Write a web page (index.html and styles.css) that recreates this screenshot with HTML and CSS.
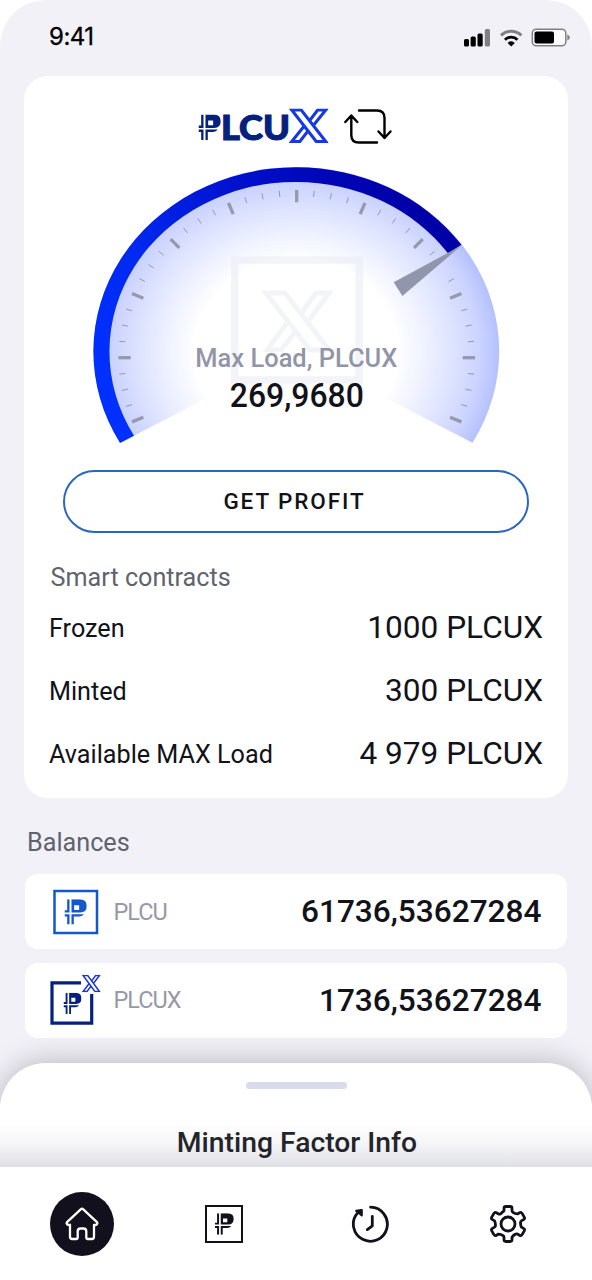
FILE: index.html
```html
<!DOCTYPE html>
<html lang="en">
<head>
<meta charset="utf-8">
<title>PLCUX wallet</title>
<link rel="stylesheet" href="styles.css">
</head>
<body>
<svg class="defs" width="0" height="0" aria-hidden="true">
  <symbol id="p-mark" viewBox="0 0 67 76" preserveAspectRatio="none">
    <path fill="currentColor" d="M8 0h7v40H0v-7h8zM0 45h15v31H8V52H0zM21 45h37q-5 7-14 7H28v24h-7z"/>
    <path fill="currentColor" fill-rule="evenodd" d="M21 0h24q22 1 22 20t-20 20H21zM29 18v14h15V18z"/>
  </symbol>
  <symbol id="x-mark" viewBox="0 0 40 34" preserveAspectRatio="none">
    <path fill="none" stroke="currentColor" stroke-width="3.1" d="M2.8 1.5h9.600l24.800 31h-9.600zM21 11.800l8-10.300h8.200L24.800 16.400M15.200 17.600L2.800 32.500H11l8.200-10.300"/>
  </symbol>
</svg>
<div class="phone">
  <header class="status">
    <span class="time">9:41</span>
    <svg width="107" height="20" viewBox="0 0 107 20">
      <rect x="1" y="11" width="5" height="7.5" rx="1.5"/><rect x="7.600" y="8.500" width="5.200" height="10" rx="1.500"/><rect x="14.500" y="5.500" width="5.200" height="13" rx="1.500"/>
      <rect x="21.800" y="1" width="5.200" height="17.500" rx="1.500" fill="#808084"/>
      <path d="M38 7.400a14.500 14.500 0 0 1 20.400 0" fill="none" stroke="#808084" stroke-width="3"/>
      <path d="M41.900 11.700a9 9 0 0 1 12.600 0" fill="none" stroke="#000" stroke-width="2.800"/>
      <path d="M48.200 18.600l-3.600-3.700a5 5 0 0 1 7.200 0z"/>
      <rect x="69.300" y="1.200" width="33.500" height="16.600" rx="4" fill="#fbfbfc" stroke="#808084" stroke-width="1.500"/>
      <rect x="71.500" y="3.500" width="19.500" height="12" rx="2"/>
      <path d="M104.300 6.500q2.500 1 2.500 3t-2.500 3z" fill="#808084"/>
    </svg>
  </header>

  <main class="content">
    <section class="card">
      <div class="brand">
        <svg width="131" height="36" viewBox="198 107 131 36">
          <use href="#p-mark" x="198.500" y="114.500" width="22.300" height="25.500" color="#06207e"/>
          <text class="brand-text" x="221" y="139.500" textLength="69" lengthAdjust="spacingAndGlyphs">LCU</text>
          <use href="#x-mark" x="289" y="108.500" width="39.500" height="34.500" color="#143ae0"/>
        </svg>
        <svg width="48" height="36" viewBox="344 108 48 36" fill="none" stroke="#000" stroke-width="2.400" stroke-linecap="round" stroke-linejoin="round">
          <path d="M345.300 122l6-6.500 6 6.500M351.300 116v19q0 7.500 7.500 7.500H377M359 110.500h18q7.500 0 7.500 7.500v19.500M378.500 131.500l6 6.500 6-6.500"/>
        </svg>
      </div>
      <svg class="gauge" width="408" height="278" viewBox="92 166 408 278">
        <defs>
          <radialGradient id="glow" gradientUnits="userSpaceOnUse" cx="0" cy="0" r="203" gradientTransform="translate(296.200 351.600) scale(1 .91)">
            <stop offset=".5" stop-color="#fff"/><stop offset=".72" stop-color="#e5e9ff"/><stop offset=".9" stop-color="#ccd4ff"/><stop offset="1" stop-color="#b4c1ff"/>
          </radialGradient>
          <linearGradient id="band" gradientUnits="userSpaceOnUse" x1="115" y1="400" x2="410" y2="200">
            <stop offset="0" stop-color="#0030ff"/><stop offset=".3" stop-color="#0028f0"/><stop offset=".7" stop-color="#000cc6"/><stop offset="1" stop-color="#0000a6"/>
          </linearGradient>
        </defs>
        <path fill="url(#glow)" d="M296.200 351.600L120.400 442.800A202.800 184.300 0 1 1 472.400 442.800Z"/>
        <g class="watermark">
          <rect x="234.700" y="260" width="124.500" height="120" stroke-width="7.500"/>
          <path stroke-width="5" d="M266 293h19l44 57h-19zM302 312l14-19h13l-20 27M287 323l-20 27h14l15-19"/>
        </g>
        <path fill="url(#band)" d="M120 442.900A202.800 184.300 0 0 1 296.200 167.300A202.800 184.300 0 0 1 461.500 244.840L448 253.300A186.300 169.700 0 0 0 296.200 181.900A186.300 169.700 0 0 0 134 435.800Z"/>
        <g id="ticks" stroke="#9599ab"></g>
        <path fill="#9296ad" d="M461.600 245.500L393.700 282.200 402.400 296Z"/>
        <text class="gauge-label" x="296.300" y="366.900" text-anchor="middle" textLength="202" lengthAdjust="spacingAndGlyphs">Max Load, PLCUX</text>
        <text class="gauge-value" x="296.800" y="407.200" text-anchor="middle" textLength="134" lengthAdjust="spacingAndGlyphs">269,9680</text>
      </svg>
      <button class="profit">GET PROFIT</button>
      <h2 class="subhead contracts">Smart contracts</h2>
      <dl class="rows">
        <div class="row"><dt>Frozen</dt><dd>1000 PLCUX</dd></div>
        <div class="row"><dt>Minted</dt><dd>300 PLCUX</dd></div>
        <div class="row"><dt>Available MAX Load</dt><dd>4 979 PLCUX</dd></div>
      </dl>
    </section>

    <h2 class="subhead balances">Balances</h2>
    <div class="balance">
      <svg width="54" height="54" viewBox="0 0 54 54" color="#1459cc">
        <rect x="4.500" y="6" width="42.500" height="42" fill="none" stroke="currentColor" stroke-width="2.500"/>
        <use href="#p-mark" x="14.500" y="14.300" width="22.300" height="25.300"/>
      </svg>
      <span class="coin">PLCU</span><span class="amount">61736,53627284</span>
    </div>
    <div class="balance">
      <svg width="54" height="54" viewBox="0 0 54 54" color="#06207e">
        <path d="M31 9.800H2v40.300h39.700V21" fill="none" stroke="currentColor" stroke-width="3.200"/>
        <use href="#p-mark" x="13.500" y="19.800" width="18" height="21.200"/>
        <use href="#x-mark" x="31.800" y="1.800" width="19" height="17.500" color="#1c36d2"/>
      </svg>
      <span class="coin">PLCUX</span><span class="amount">1736,53627284</span>
    </div>
  </main>

  <section class="sheet"><div class="grip"></div><h2 class="sheet-title">Minting Factor Info</h2></section>
  <nav class="tabs">
    <a class="tab tab-active"><svg width="36" height="36" viewBox="0 0 36 36" fill="none" stroke="#fff" stroke-width="2.300" stroke-linejoin="round" stroke-linecap="round"><path d="M16.700 3.300L3.300 15.800q-1.300 1.500 0 2.700 1 .8 2.700.3v12q0 2.200 2.200 2.200h4.300q1.200 0 1.200-1.200v-6.500q0-2.800 2.800-2.800h3q2.800 0 2.800 2.800v6.500q0 1.200 1.200 1.200h4.300q2.200 0 2.200-2.200v-12q1.700.5 2.700-.3 1.300-1.200 0-2.700L19.300 3.300q-1.300-1.200-2.600 0z"/></svg></a>
    <a class="tab tab-coin"><svg width="38" height="38" viewBox="0 0 38 38" color="#11101c"><rect x="1" y="1" width="36" height="36" fill="none" stroke="currentColor" stroke-width="2"/><use href="#p-mark" x="9.800" y="8.300" width="19" height="21.500"/></svg></a>
    <a class="tab"><svg width="38" height="38" viewBox="0 0 38 38" fill="none" stroke="#11101c" stroke-width="2.800" stroke-linecap="round" stroke-linejoin="round"><path d="M19.600 2.200a17 17 0 1 1-13.200 6L9.800 5.600"/><path fill="#11101c" stroke-width="2" d="M5.100 5.800l5.700-.7v5.500z"/><path d="M21.300 11.500v9.300l-5 3.800"/></svg></a>
    <a class="tab"><svg width="38" height="40" viewBox="-19 -20 38 40" fill="none" stroke="#11101c" stroke-width="2.800" stroke-linejoin="round"><circle r="7"/><path id="gear"/></svg></a>
  </nav>
</div>
<script src="gauge.js"></script>
</body>
</html>
```
FILE: styles.css
```css
* { box-sizing: border-box; }
body { margin: 0; background: #fff; font-family: Roboto, "Liberation Sans", sans-serif; color: #11121a; }
h2, dl, dd { margin: 0; font-weight: 400; }
.defs { position: absolute; }
.phone { width: 592px; height: 1280px; display: flex; flex-direction: column; overflow: hidden; background: #f2f1f8; border-radius: 46px 46px 0 0; }
.status { height: 76px; flex: none; display: flex; justify-content: space-between; align-items: flex-start; padding: 23px 22px 0 49px; }
.status svg { margin-top: 5px; }
.time { font: 400 24px/27px Inter, sans-serif; letter-spacing: -.5px; color: #000; -webkit-text-stroke: .3px #000; }
.content { height: 987px; flex: none; padding: 0 24px; }
.card { height: 722px; background: #fff; border-radius: 24px; display: flex; flex-direction: column; padding: 31px 25px 0; }
.brand { display: flex; height: 59px; padding-left: 149px; gap: 15px; align-items: flex-start; }
.brand svg { flex: none; overflow: visible; }
.brand svg + svg { margin-top: 1px; }
.brand-text { font: 900 33.5px Lato, sans-serif; fill: #06207e; stroke: #06207e; stroke-width: 1.1px; }
.gauge { flex: none; margin-left: 43px; }
.watermark { fill: none; stroke: #e9ebf3; stroke-opacity: .55; }
.gauge-label { font-size: 26px; font-weight: 500; fill: #9295a8; }
.gauge-value { font-size: 32.5px; font-weight: 500; fill: #11121a; }
.profit { flex: none; width: 466px; height: 63px; margin: 26px 0 0 14px; border: 2px solid #2b66bf; border-radius: 32px; background: #fff; font: 500 22.500px/1 Roboto, sans-serif; letter-spacing: 1.9px; color: #11121a; padding: 0 3px 0 0; }
.subhead { font-size: 25.200px; line-height: 30px; color: #5f636e; }
.contracts { margin: 30px 0 0 1.5px; }
.rows { padding-top: 4px; }
.row { height: 63px; display: flex; justify-content: space-between; align-items: center; }
.row dt { font-size: 25.200px; }
.row dd { font-size: 31.600px; padding-bottom: 2px; }
.balances { margin: 30px 0 0 3px; height: 46px; }
.balance { height: 75px; margin: 0 1px 13.500px; padding: 0 25.500px 0 25px; background: #fff; border-radius: 13px; display: flex; align-items: center; }
.coin { font-size: 23.500px; color: #9798a5; margin-left: 9.5px; letter-spacing: -1px; }
.amount { margin-left: auto; font-size: 31.600px; font-weight: 500; }
.sheet { height: 104px; flex: none; background: linear-gradient(#fff 58%, #f7f7f9 76%, #dfdfe6 100%); border-radius: 46px 46px 0 0; box-shadow: 0 0 30px rgba(20,18,30,.28); display: flex; flex-direction: column; align-items: center; padding-top: 19px; }
.grip { width: 101px; height: 7px; border-radius: 3px; background: #d8dcec; }
.sheet-title { font-size: 28.300px; line-height: 34px; font-weight: 500; color: #24252b; margin: 36.5px 0 0 2px; }
.tabs { position: relative; flex: none; height: 113px; background: #fff; display: grid; grid-template-columns: 64px 38px 38px 38px; justify-content: space-between; align-items: center; padding: 0 65px 0 50px; }
.tab { display: flex; justify-content: center; }
.tab-active { height: 64px; align-items: center; border-radius: 50%; background: #11101c; }
.tab-coin { margin: 0 9px 0 -9px; }
```
FILE: gauge.js
```js
// Dial ticks: one major tick every fourth step along the ellipse.
const ticks = document.getElementById('ticks');
for (let i = -4; i <= 36; i++) {
  if (i === 26) continue; // under the needle
  const major = i % 4 === 0;
  const a = Math.PI * i * 5.625 / 180;
  const c = Math.cos(a), s = Math.sin(a);
  const len = major ? 12.3 : 6.2;
  const ln = document.createElementNS('http://www.w3.org/2000/svg', 'line');
  ln.setAttribute('x1', 296.7 - 178.3 * c);
  ln.setAttribute('y1', 357.7 - 167.7 * s);
  ln.setAttribute('x2', 296.7 - (178.3 - len) * c);
  ln.setAttribute('y2', 357.7 - (167.7 - len) * s);
  ln.setAttribute('stroke-width', major ? 3.3 : 1);
  ticks.appendChild(ln);
}

// Settings gear: six rounded teeth.
let d = '';
for (let k = 0; k < 6; k++) {
  const t = k * Math.PI / 3;
  const p = (x, y) => (x * Math.cos(t) - y * Math.sin(t)).toFixed(2) + ' ' + (x * Math.sin(t) + y * Math.cos(t)).toFixed(2);
  d += (k ? 'Q' + p(-5.4, -11.2) + ' ' : 'M') + p(-4, -13.2)
    + 'L' + p(-4, -15.6) + 'Q' + p(-4, -17.5) + ' ' + p(-2.2, -17.5)
    + 'L' + p(2.2, -17.5) + 'Q' + p(4, -17.5) + ' ' + p(4, -15.6)
    + 'L' + p(4, -13.2) + 'Q' + p(4, -12) + ' ' + p(5.4, -11.4);
}
document.getElementById('gear').setAttribute('d', d + 'Z');
```
